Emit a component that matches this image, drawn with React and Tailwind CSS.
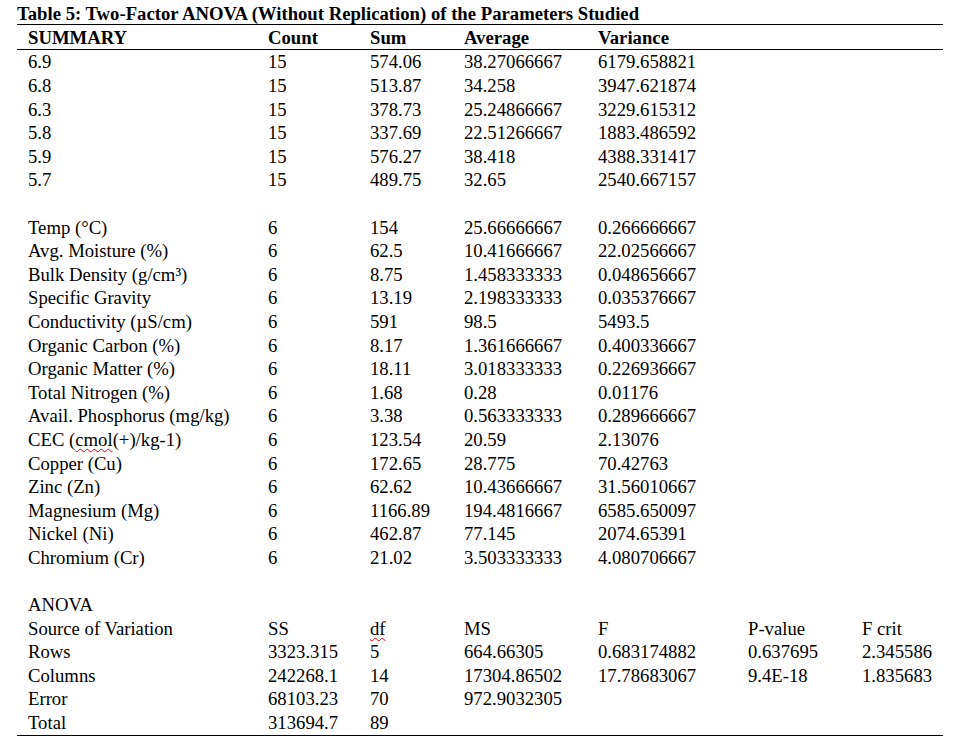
const summaryRows = [
  ['6.9', '15', '574.06', '38.27066667', '6179.658821'],
  ['6.8', '15', '513.87', '34.258', '3947.621874'],
  ['6.3', '15', '378.73', '25.24866667', '3229.615312'],
  ['5.8', '15', '337.69', '22.51266667', '1883.486592'],
  ['5.9', '15', '576.27', '38.418', '4388.331417'],
  ['5.7', '15', '489.75', '32.65', '2540.667157'],
]

const paramRows = [
  ['Temp (°C)', '6', '154', '25.66666667', '0.266666667'],
  ['Avg. Moisture (%)', '6', '62.5', '10.41666667', '22.02566667'],
  ['Bulk Density (g/cm³)', '6', '8.75', '1.458333333', '0.048656667'],
  ['Specific Gravity', '6', '13.19', '2.198333333', '0.035376667'],
  ['Conductivity (µS/cm)', '6', '591', '98.5', '5493.5'],
  ['Organic Carbon (%)', '6', '8.17', '1.361666667', '0.400336667'],
  ['Organic Matter (%)', '6', '18.11', '3.018333333', '0.226936667'],
  ['Total Nitrogen (%)', '6', '1.68', '0.28', '0.01176'],
  ['Avail. Phosphorus (mg/kg)', '6', '3.38', '0.563333333', '0.289666667'],
  ['CEC', '6', '123.54', '20.59', '2.13076'],
  ['Copper (Cu)', '6', '172.65', '28.775', '70.42763'],
  ['Zinc (Zn)', '6', '62.62', '10.43666667', '31.56010667'],
  ['Magnesium (Mg)', '6', '1166.89', '194.4816667', '6585.650097'],
  ['Nickel (Ni)', '6', '462.87', '77.145', '2074.65391'],
  ['Chromium (Cr)', '6', '21.02', '3.503333333', '4.080706667'],
]

const anovaRows = [
  ['Rows', '3323.315', '5', '664.66305', '0.683174882', '0.637695', '2.345586'],
  ['Columns', '242268.1', '14', '17304.86502', '17.78683067', '9.4E-18', '1.835683'],
  ['Error', '68103.23', '70', '972.9032305', '', '', ''],
  ['Total', '313694.7', '89', '', '', '', ''],
]

const cols = 'grid grid-cols-[240px_102px_94px_134px_150px_114px_81px] pl-[11px]'

function Row({ cells, bold = false }) {
  return (
    <div className={`${cols} h-[23.6px] items-center ${bold ? 'font-bold' : ''}`}>
      {cells.map((c, i) => (
        <div key={i} className="whitespace-nowrap leading-none pt-[2px]">
          {c === 'CEC' ? (
            <span>
              CEC (<span className="underline decoration-wavy decoration-red-600 decoration-1 underline-offset-2">cmol</span>(+)/kg-1)
            </span>
          ) : c === 'df' ? (
            <span className="underline decoration-wavy decoration-red-600 decoration-1 underline-offset-2">df</span>
          ) : (
            c
          )}
        </div>
      ))}
    </div>
  )
}

export default function App() {
  return (
    <div className="w-[978px] h-[745px] bg-white text-black text-[18.7px] font-['Liberation_Serif',serif]">
      <div className="ml-[17px] w-[926px]">
        <div className="h-[25px] flex items-center font-bold border-b border-black">
          <span className="leading-none pt-[5px]">
            Table 5: Two-Factor ANOVA (Without Replication) of the Parameters Studied
          </span>
        </div>
        <div className={`${cols} h-[25px] items-center font-bold border-b border-black`}>
          <div className="leading-none pt-[2px]">SUMMARY</div>
          <div className="leading-none pt-[2px]">Count</div>
          <div className="leading-none pt-[2px]">Sum</div>
          <div className="leading-none pt-[2px]">Average</div>
          <div className="leading-none pt-[2px]">Variance</div>
        </div>
        <div className="border-b border-black">
          {summaryRows.map((r, i) => <Row key={i} cells={r} />)}
          <div className="h-[23.6px]" />
          {paramRows.map((r, i) => <Row key={i} cells={r} />)}
          <div className="h-[23.6px]" />
          <Row cells={['ANOVA']} />
          <Row cells={['Source of Variation', 'SS', 'df', 'MS', 'F', 'P-value', 'F crit']} />
          {anovaRows.map((r, i) => <Row key={i} cells={r} />)}
          <div className="h-[1px]" />
        </div>
      </div>
    </div>
  )
}
